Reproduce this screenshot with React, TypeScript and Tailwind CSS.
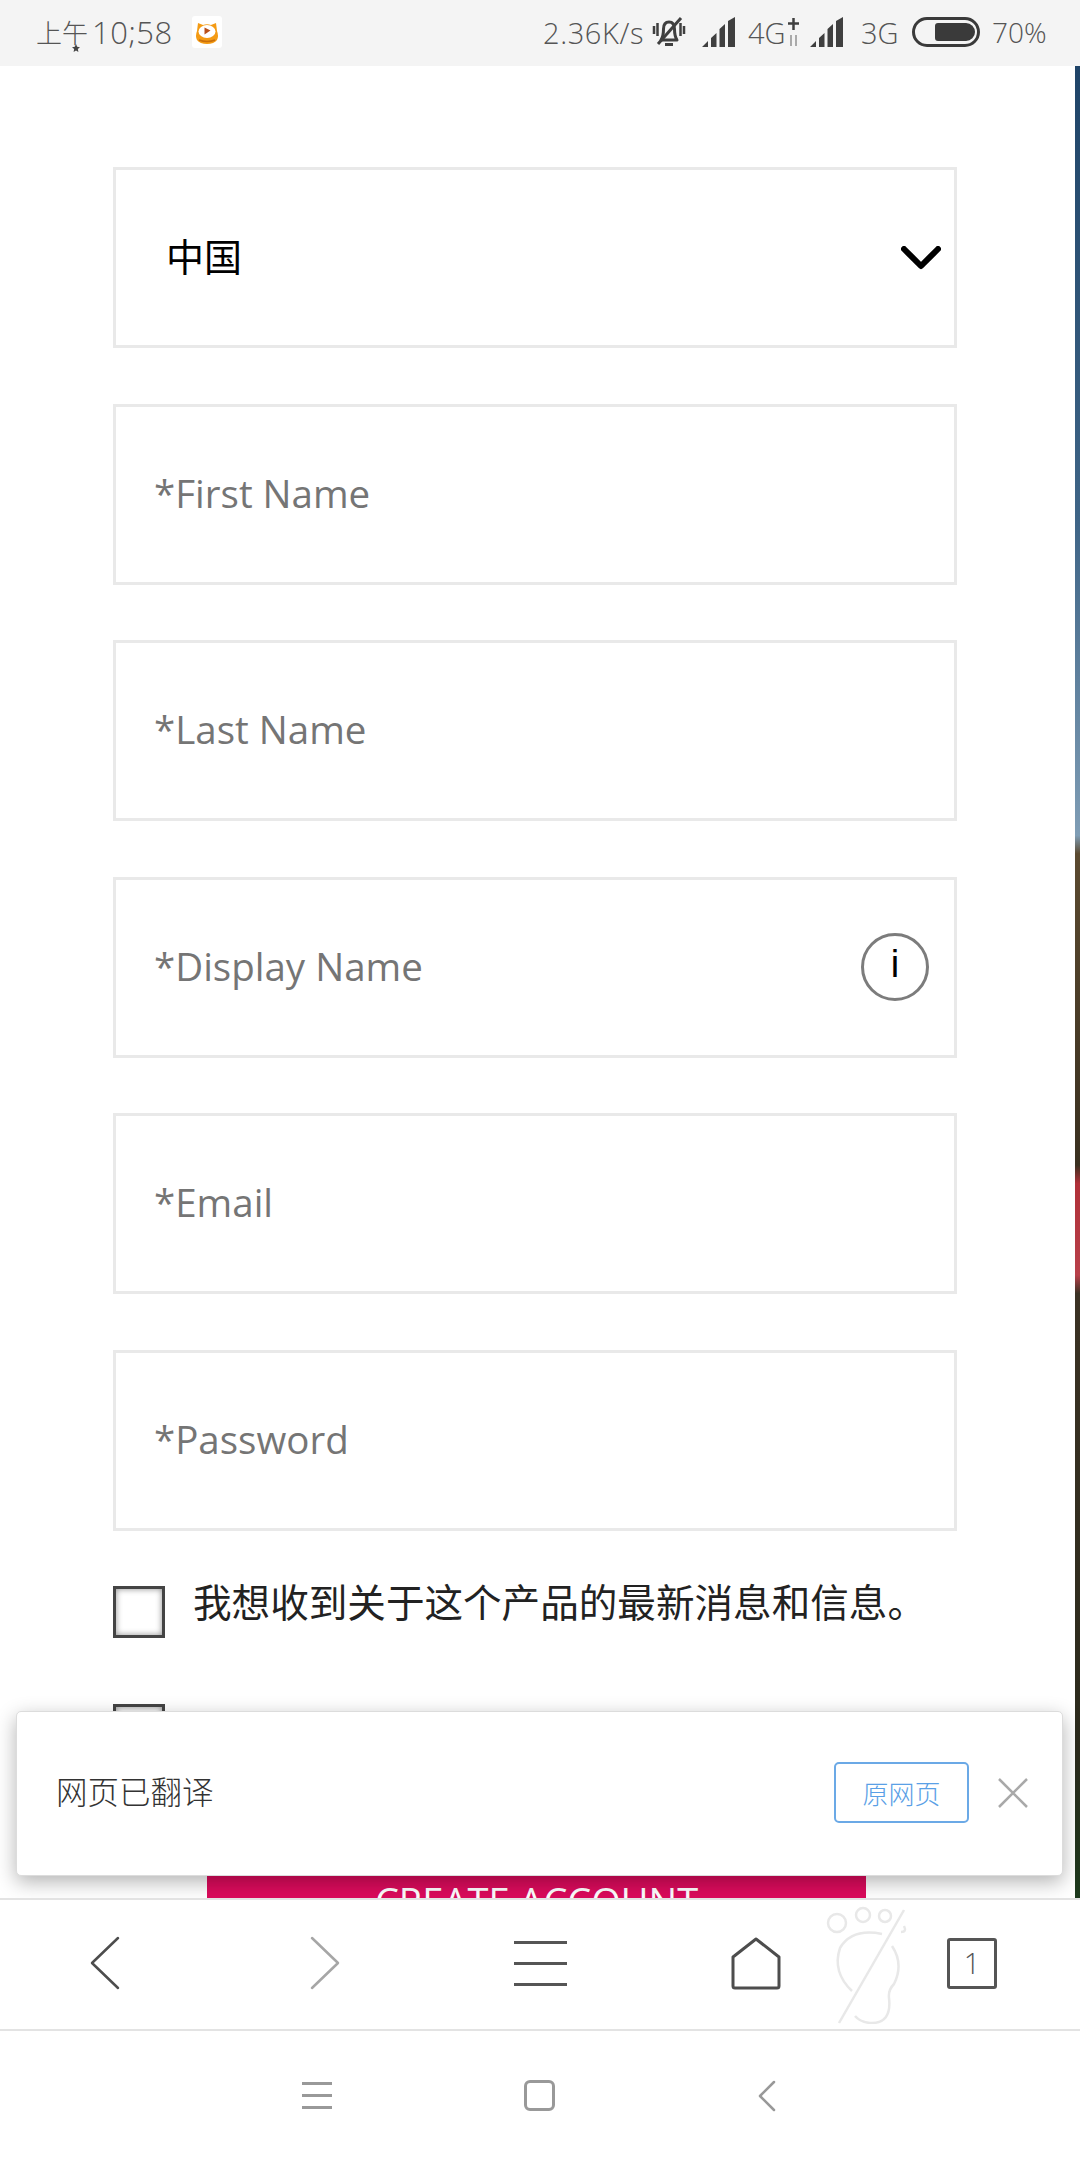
const CJK = '"Noto Sans CJK SC","Noto Sans",sans-serif';

function Field({ label, children }: { label: string; children?: React.ReactNode }) {
  return (
    <div className="flex h-[181px] items-center justify-between border-[3px] border-[#e9e9e9] pl-[38px] pr-[25px] text-[38.500px] text-[#757575] font-['Open_Sans',sans-serif]">
      <span className="-mt-[1px]">{label}</span>
      {children}
    </div>
  );
}

function CatLogo() {
  return (
    <svg width="30" height="32" viewBox="0 0 30 32" className="ml-[19px]">
      <rect width="30" height="32" rx="3" fill="#fff" />
      <path d="M5 15 L6 7 L11 9 Q15 7.500 19 9 L24 7 L25 15 Q27 20 25 24 Q22 28 15 28 Q8 28 5 24 Q3 20 5 15Z" fill="#f49b14" />
      <ellipse cx="15" cy="15.500" rx="8.500" ry="6.500" fill="#fff" />
      <path d="M12.500 11.500 L18.500 14.500 L12.500 18.500Z" fill="#b9501a" />
      <path d="M7 24 Q15 27 23 24" stroke="#c96f0c" strokeWidth="1.500" fill="none" />
    </svg>
  );
}

function Signal() {
  return (
    <svg width="33" height="30" viewBox="0 0 33 30">
      <path d="M0 30 L6 24 V30Z M9 21 L14.500 16 V30 H9Z M17.500 12 L23 7 V30 H17.500Z M26 4 L33 0 V30 H26Z" fill="#3f3f3f" />
    </svg>
  );
}

function StatusBar() {
  return (
    <div className="flex h-[66px] items-center justify-between bg-[#f4f4f4] pb-[2px] pl-[36px] pr-[37px] text-[#555] font-['Open_Sans',sans-serif] font-light">
      <div className="flex items-center">
        <span className="relative text-[26px] leading-none" style={{ fontFamily: CJK }}>
          上午
          <svg width="8" height="8" viewBox="0 0 10 10" className="absolute left-[36px] top-[25px]">
            <path d="M5 0 L6.500 3.500 L10 4 L7.300 6.300 L8 10 L5 8 L2 10 L2.700 6.300 L0 4 L3.500 3.500Z" fill="#444" />
          </svg>
        </span>
        <span className="ml-[4px] text-[31px] leading-none tracking-[0.5px]">10;58</span>
        <CatLogo />
      </div>
      <div className="flex items-center">
        <span className="w-[99px] whitespace-nowrap text-[29px] leading-none tracking-[0.6px]">2.36K/s</span>
        <svg width="34" height="32" viewBox="0 0 34 32" className="ml-[10px]" fill="none" stroke="#3f3f3f">
          <path d="M9 24 Q11.500 20 11.500 13 Q11.500 6 17 6 Q22.500 6 22.500 13 Q22.500 20 25 24 Z" strokeWidth="3" strokeLinejoin="round" />
          <path d="M13 28.500 H21" strokeWidth="3" />
          <path d="M6 28 L29 2" strokeWidth="3" />
          <path d="M2 10 V18 M5.500 7 V20 M28.500 7 V20 M32 10 V18" strokeWidth="2.500" />
        </svg>
        <div className="ml-[16px]"><Signal /></div>
        <span className="ml-[13px] w-[33px] text-[29px] leading-none">4G</span>
        <svg width="13" height="30" viewBox="0 0 13 30" className="ml-[6px]">
          <path d="M6.500 1 V13 M1 6.500 H12" stroke="#3f3f3f" strokeWidth="2.500" />
          <path d="M4 18 V29 M9 18 V29" stroke="#aaa" strokeWidth="2" />
        </svg>
        <div className="ml-[10px]"><Signal /></div>
        <span className="ml-[18px] w-[33px] text-[29px] leading-none">3G</span>
        <div className="ml-[18px] flex h-[30px] w-[68px] items-center justify-end rounded-full border-[3.500px] border-[#3a3a3a] pr-[2px]">
          <div className="h-[18px] w-[40px] rounded-l-[3px] rounded-r-[9px] bg-[#3a3a3a]" />
        </div>
        <span className="ml-[12px] w-[51px] whitespace-nowrap text-[28px] leading-none">70%</span>
      </div>
    </div>
  );
}

function Checkbox() {
  return <div className="h-[52px] w-[52px] shrink-0 border-[3px] border-[#444] shadow-[inset_0_0_6px_rgba(0,0,0,0.45)]" />;
}

function Form() {
  return (
    <div className="relative flex flex-1 overflow-hidden">
      <div className="flex min-w-0 flex-1 flex-col bg-white pl-[113px] pr-[118px] pt-[101px]">
        <div className="flex flex-col gap-[55.500px]">
          <div className="flex h-[181px] items-center justify-between border-[3px] border-[#e9e9e9] pl-[50px] pr-[13px] text-[38px] text-black" style={{ fontFamily: CJK }}>
            <span className="-mt-[6px]">中国</span>
            <svg width="40" height="24" viewBox="0 0 40 24" fill="none" stroke="#000" strokeWidth="6" strokeLinecap="round" strokeLinejoin="round">
              <path d="M3 3 L20 20 L37 3" />
            </svg>
          </div>
          <Field label="*First Name" />
          <Field label="*Last Name" />
          <Field label="*Display Name">
            <div className="flex h-[68px] w-[68px] items-center justify-center rounded-full border-[3px] border-[#7c7c7c] pb-[6px] text-[38px] text-black font-['Liberation_Sans',sans-serif]">i</div>
          </Field>
          <Field label="*Email" />
          <Field label="*Password" />
        </div>
        <div className="mt-[55px] flex items-start gap-[28px]">
          <Checkbox />
          <span className="-mt-[12px] whitespace-nowrap text-[38.600px] leading-[52px] text-[#222]" style={{ fontFamily: CJK }}>我想收到关于这个产品的最新消息和信息。</span>
        </div>
        <div className="mt-[66px]"><Checkbox /></div>
        <div className="ml-[94px] mr-[91px] mt-[104px] flex h-[100px] shrink-0 justify-center bg-[#dc0b5c] pt-[13px] font-['Open_Sans',sans-serif] text-[38px] text-white">CREATE ACCOUNT</div>
      </div>
      <div className="w-[5px] shrink-0 bg-[linear-gradient(180deg,#1f4468_0%,#3f6587_25%,#7f9db5_42%,#5b4a30_43%,#3a3020_60%,#b03038_61%,#b8404a_66%,#3b3224_67%,#2b2a1c_92%,#1d3a1d_100%)]" />
      <div className="absolute bottom-[22px] left-[16px] flex h-[165px] w-[1047px] items-center justify-between rounded-[5px] border border-[#dcdcdc] bg-white pb-[2px] pl-[39px] pr-[34px] shadow-[0_6px_20px_rgba(0,0,0,0.3)]">
        <span className="-mt-[3px] text-[31.500px] font-light text-[#333]" style={{ fontFamily: CJK }}>网页已翻译</span>
        <div className="flex items-center gap-[29px]">
          <div className="flex h-[61px] w-[135px] items-center justify-center rounded-[5px] border-2 border-[#6ba9e6] text-[26px] font-light text-[#5aa0e6]" style={{ fontFamily: CJK }}>原网页</div>
          <svg width="30" height="30" viewBox="0 0 30 30" stroke="#a9a9a9" strokeWidth="2.500">
            <path d="M1 1 L29 29 M29 1 L1 29" />
          </svg>
        </div>
      </div>
    </div>
  );
}

function Toolbar() {
  return (
    <div className="relative flex h-[133px] shrink-0 items-center border-y-2 border-[#e3e3e3] bg-white pb-[3px] pl-[90px]">
      <svg width="30" height="54" viewBox="0 0 30 54" fill="none" stroke="#4d4d4d" strokeWidth="2.500" strokeLinecap="round" strokeLinejoin="round">
        <path d="M28 2 L2 27 L28 52" />
      </svg>
      <svg width="30" height="54" viewBox="0 0 30 54" fill="none" stroke="#a6a6a6" strokeWidth="2.500" strokeLinecap="round" strokeLinejoin="round" className="ml-[190px]">
        <path d="M2 2 L28 27 L2 52" />
      </svg>
      <div className="ml-[174px] flex w-[53px] flex-col gap-[18px]">
        <div className="h-[3px] bg-[#555]" />
        <div className="h-[3px] bg-[#555]" />
        <div className="h-[3px] bg-[#555]" />
      </div>
      <svg width="50" height="53" viewBox="0 0 50 53" fill="none" stroke="#4d4d4d" strokeWidth="3" strokeLinejoin="round" className="ml-[164px]">
        <path d="M2 20 L25 2 L48 20 V49 Q48 51 46 51 H4 Q2 51 2 49Z" />
      </svg>
      <svg width="90" height="118" viewBox="0 0 90 118" fill="none" stroke="#e8e8e8" strokeWidth="2.500" className="absolute left-[826px] top-[6px]">
        <circle cx="11" cy="17" r="9" />
        <circle cx="37" cy="9" r="7" />
        <circle cx="59" cy="10" r="6" />
        <path d="M78 20 Q81 26 75 26" />
        <path d="M78 4 L13 117" />
        <path d="M56 28 Q26 22 14 42 Q6 66 26 85" />
        <path d="M66 40 Q78 58 68 78 Q62 84 63 92 Q66 118 44 117 Q34 116 29 110" />
      </svg>
      <div className="ml-[166px] flex h-[51px] w-[50px] items-center justify-center rounded-[3px] border-[3px] border-[#555] font-['Open_Sans',sans-serif] text-[29px] font-light text-[#555]">1</div>
    </div>
  );
}

function NavBar() {
  return (
    <div className="flex h-[129px] shrink-0 items-center justify-center bg-white pr-[2px]">
      <div className="flex w-[30px] flex-col gap-[9px]">
        <div className="h-[3px] bg-[#999]" />
        <div className="h-[3px] bg-[#999]" />
        <div className="h-[3px] bg-[#999]" />
      </div>
      <div className="ml-[192px] h-[31px] w-[31px] rounded-[6px] border-[3px] border-[#999]" />
      <svg width="18" height="32" viewBox="0 0 18 32" fill="none" stroke="#999" strokeWidth="2.500" strokeLinecap="round" strokeLinejoin="round" className="ml-[203px]">
        <path d="M16 2 L2 16 L16 30" />
      </svg>
    </div>
  );
}

export default function App() {
  return (
    <div className="flex h-[2160px] w-[1080px] flex-col overflow-hidden bg-white">
      <StatusBar />
      <Form />
      <Toolbar />
      <NavBar />
    </div>
  );
}
